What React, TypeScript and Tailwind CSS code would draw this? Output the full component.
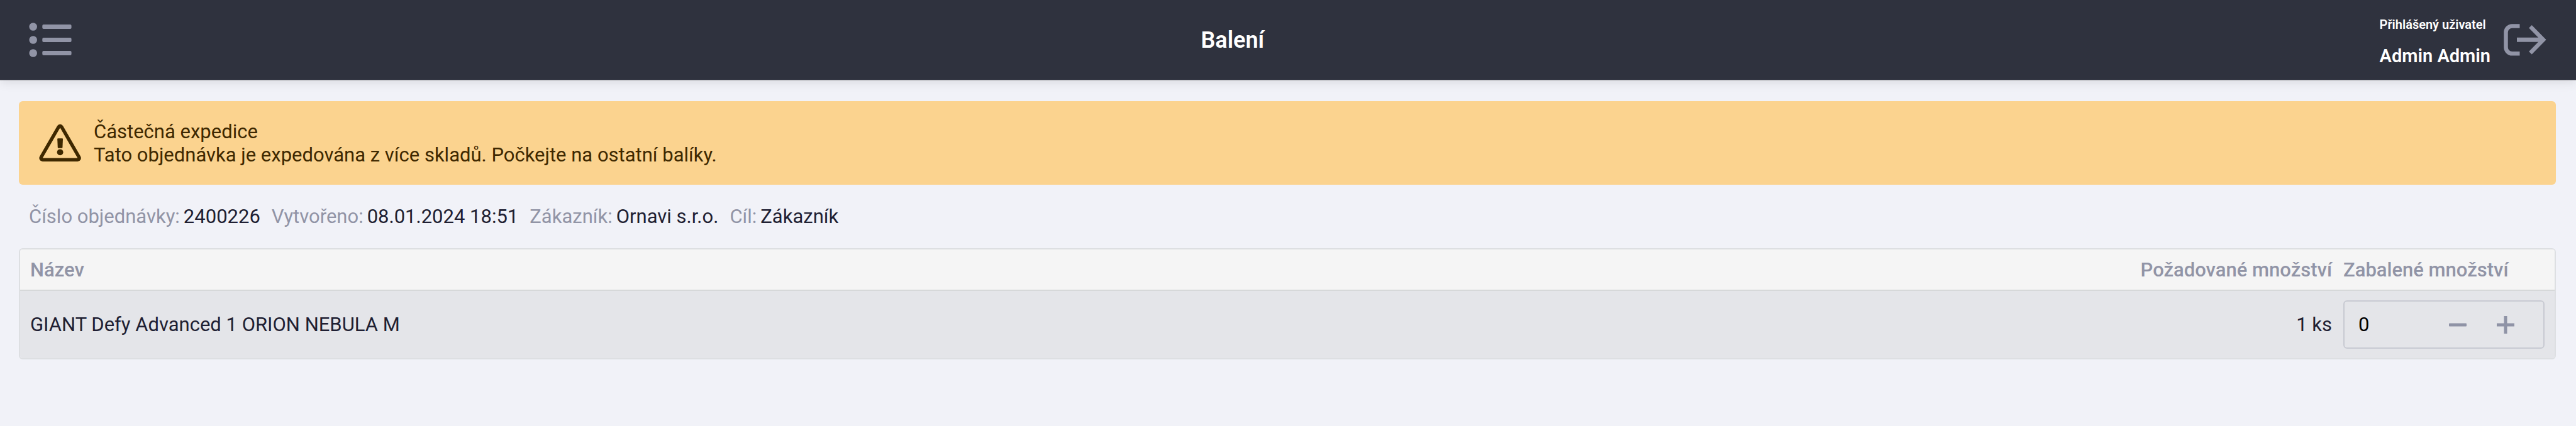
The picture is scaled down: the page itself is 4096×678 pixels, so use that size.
import React from 'react';

const orderInfo = [
  { label: 'Číslo objednávky', value: '2400226' },
  { label: 'Vytvořeno', value: '08.01.2024 18:51' },
  { label: 'Zákazník', value: 'Ornavi s.r.o.' },
  { label: 'Cíl', value: 'Zákazník' },
];

const items = [{ name: 'GIANT Defy Advanced 1 ORION NEBULA M', requested: '1 ks', packed: 0 }];

const ListIcon: React.FC = () => (
  <svg width="80" height="80" viewBox="0 0 80 80" fill="currentColor" aria-hidden="true">
    <circle cx="12.7" cy="18.5" r="6.3" />
    <circle cx="12.7" cy="39.5" r="6.3" />
    <circle cx="12.7" cy="60.5" r="6.3" />
    <rect x="27.3" y="15" width="46.3" height="6.9" rx="2" />
    <rect x="27.3" y="36" width="46.3" height="6.9" rx="2" />
    <rect x="27.3" y="57" width="46.3" height="6.9" rx="2" />
  </svg>
);

const LogoutIcon: React.FC = () => (
  <svg width="80" height="80" viewBox="0 0 80 80" fill="none" stroke="currentColor" strokeWidth="6.5" aria-hidden="true">
    <path d="M32.5 17.4H20.5a10 10 0 0 0-10 10v23.9a10 10 0 0 0 10 10h12" />
    <path d="M28 39.3h39" strokeWidth="6.9" />
    <path d="M49.4 18.3 70 39.3 49.4 60.3" />
  </svg>
);

const WarningIcon: React.FC = () => (
  <svg width="67" height="60" viewBox="0 0 67 60" className="overflow-visible" aria-hidden="true">
    <path
      d="M31.3 3.8 3.5 52.2a2.7 2.7 0 0 0 2.3 4.1h55.6a2.7 2.7 0 0 0 2.3-4.1L35.9 3.8a2.65 2.65 0 0 0-4.6 0Z"
      fill="none"
      stroke="currentColor"
      strokeWidth="5.4"
    />
    <path d="M29.2 23.2q0-1 1-1h6.8q1 0 1 1l-.6 13.5q-.1 1-1 1h-5.6q-.9 0-1-1Z" fill="currentColor" />
    <circle cx="33.6" cy="44.3" r="4.9" fill="currentColor" />
  </svg>
);

const Header: React.FC = () => (
  <header className="relative flex h-[127px] items-center bg-[#2f323e] pr-7 pl-6 text-white shadow-[0_2px_0_rgba(0,0,0,0.1),0_4px_16px_rgba(0,0,0,0.1)]">
    <button type="button" aria-label="Menu" className="flex w-28 justify-center text-[#9194a6]">
      <ListIcon />
    </button>
    <h1 className="flex-1 text-center text-[36px] leading-[44px] font-semibold">Balení</h1>
    <div className="flex items-center">
      <div className="pt-1.5 font-semibold">
        <p className="text-[20px] leading-[24px]">Přihlášený uživatel</p>
        <p className="mt-5 text-[29px] leading-[36px]">Admin Admin</p>
      </div>
      <button type="button" aria-label="Odhlásit" className="flex w-27 justify-center text-[#9194a6]">
        <LogoutIcon />
      </button>
    </div>
  </header>
);

const Alert: React.FC = () => (
  <div role="alert" className="flex h-[133px] items-center gap-5 rounded-md bg-[#fbd38f] px-8 text-[#3e2800]">
    <WarningIcon />
    <div className="leading-[37px]">
      <p>Částečná expedice</p>
      <p>Tato objednávka je expedována z více skladů. Počkejte na ostatní balíky.</p>
    </div>
  </div>
);

const QuantityInput: React.FC<{ value: number }> = ({ value }) => (
  <div className="flex h-[77px] items-center rounded-md border-2 border-[#c8cad2] px-5.5 text-black">
    <input type="text" inputMode="numeric" aria-label="Zabalené množství" defaultValue={value} className="w-24 flex-1 bg-transparent outline-none" />
    <button type="button" aria-label="Ubrat" className="flex w-[76px] justify-center text-[#8f93a6]">
      <svg width="28" height="28" viewBox="0 0 28 28" aria-hidden="true">
        <rect y="11.5" width="28" height="5" rx="1" fill="currentColor" />
      </svg>
    </button>
    <button type="button" aria-label="Přidat" className="flex w-[76px] justify-center text-[#8f93a6]">
      <svg width="28" height="28" viewBox="0 0 28 28" aria-hidden="true">
        <path d="M0 14h28M14 0v28" stroke="currentColor" strokeWidth="5" />
      </svg>
    </button>
  </div>
);

const App: React.FC = () => {
  return (
    <div className="min-h-screen bg-[#f1f2f8] font-[Roboto,sans-serif] text-[31px] leading-[37px] text-[#1f1f33]">
      <Header />

      <main className="pt-[34px] pr-8 pb-8 pl-[30px]">
        <Alert />

        <dl className="flex gap-4.5 px-4 py-8">
          {orderInfo.map((info) => (
            <div key={info.label} className="flex gap-1.5">
              <dt className="text-[#9194a6]">{info.label}:</dt>
              <dd>{info.value}</dd>
            </div>
          ))}
        </dl>

        <div className="overflow-hidden rounded-md border-2 border-[#dddfe2]">
          <table className="w-full">
            <thead className="border-b-2 border-[#d6d8d9] bg-[#f5f5f5] text-[#9194a6]">
              <tr className="h-[65px]">
                <th className="px-4 text-left font-medium">Název</th>
                <th className="w-[320px] text-right font-medium whitespace-nowrap">Požadované množství</th>
                <th className="w-[354px] pr-4 pl-[18px] text-left font-medium">Zabalené množství</th>
              </tr>
            </thead>
            <tbody className="bg-[#e4e5e9]">
              {items.map((item) => (
                <tr key={item.name} className="h-[108px]">
                  <td className="px-4">{item.name}</td>
                  <td className="text-right">{item.requested}</td>
                  <td className="pr-4 pl-[18px]">
                    <QuantityInput value={item.packed} />
                  </td>
                </tr>
              ))}
            </tbody>
          </table>
        </div>
      </main>
    </div>
  );
};

export default App;
